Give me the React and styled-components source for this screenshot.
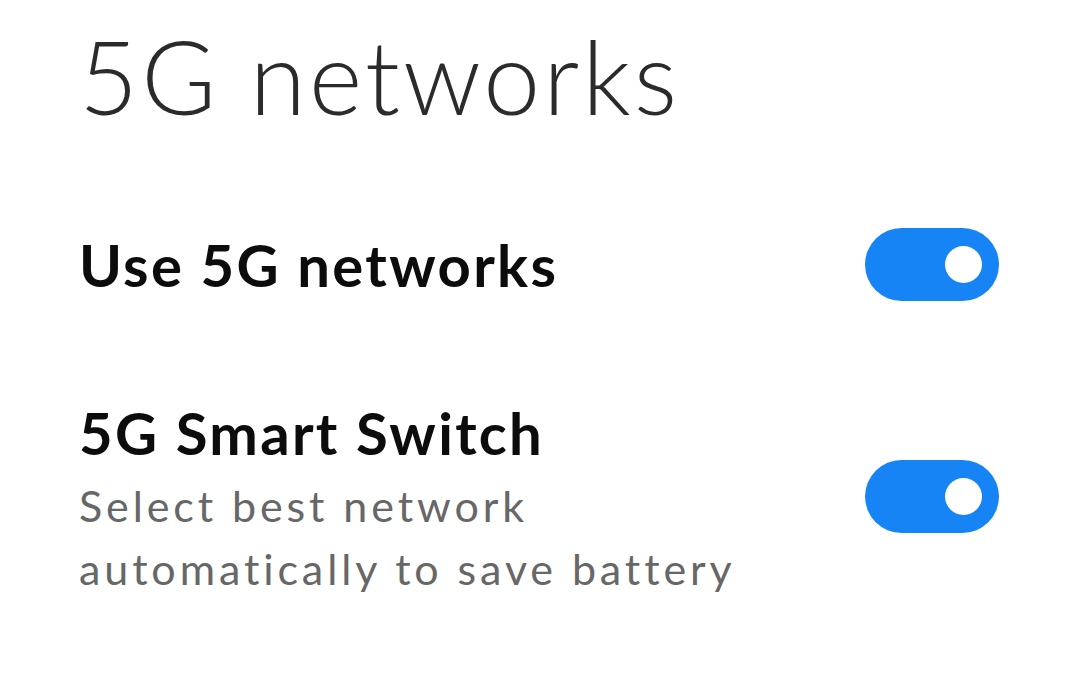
import React from 'react';
import styled, { createGlobalStyle } from 'styled-components';

const GlobalStyle = createGlobalStyle`
  html, body {
    margin: 0;
    padding: 0;
    background: #ffffff;
  }
  body {
    font-family: 'Lato', 'Noto Sans', sans-serif;
    font-variant-ligatures: none;
  }
`;

const Page = styled.div`
  width: 1080px;
  height: 673px;
  box-sizing: border-box;
  padding: 15px 81px 0 79px;
  background: #ffffff;
  overflow: hidden;
`;

const Title = styled.h1`
  margin: 0;
  font-family: 'Lato', sans-serif;
  font-weight: 300;
  font-size: 102px;
  line-height: 1.2;
  letter-spacing: 3px;
  color: #2b2b2b;
`;

const Row = styled.div`
  display: flex;
  align-items: center;
  justify-content: space-between;
  margin-top: ${(p) => p.$gap}px;
`;

const Texts = styled.div`
  display: flex;
  flex-direction: column;
`;

const Label = styled.div`
  font-family: 'Lato', sans-serif;
  font-weight: 700;
  font-size: 58px;
  line-height: 1.2;
  letter-spacing: 2.3px;
  color: #0c0c0c;
`;

const Hint = styled.div`
  margin-top: 6px;
  font-family: 'Lato', sans-serif;
  font-weight: 400;
  font-size: 43px;
  line-height: 63px;
  letter-spacing: 3.9px;
  color: #676767;
`;

const Track = styled.button`
  position: relative;
  flex: none;
  width: 134px;
  height: 73px;
  margin-bottom: ${(p) => p.$lift || 0}px;
  padding: 0;
  border: none;
  border-radius: 37px;
  background: ${(p) => (p.$on ? '#1784f6' : '#d6d6d6')};
  cursor: pointer;
`;

const Knob = styled.span`
  position: absolute;
  top: 50%;
  left: ${(p) => (p.$on ? '80px' : '17px')};
  width: 37px;
  height: 37px;
  margin-top: -18.5px;
  border-radius: 50%;
  background: #ffffff;
`;

const Toggle = ({ on, onClick, lift }) => (
  <Track $on={on} $lift={lift} onClick={onClick} aria-pressed={on}>
    <Knob $on={on} />
  </Track>
);

export default function App() {
  const [use5g, setUse5g] = React.useState(true);
  const [smart, setSmart] = React.useState(true);

  return (
    <Page>
      <GlobalStyle />
      <Title>5G networks</Title>
      <Row $gap={91}>
        <Label>Use 5G networks</Label>
        <Toggle on={use5g} onClick={() => setUse5g(!use5g)} />
      </Row>
      <Row $gap={97}>
        <Texts>
          <Label>5G Smart Switch</Label>
          <Hint>
            Select best network
            <br />
            automatically to save battery
          </Hint>
        </Texts>
        <Toggle on={smart} lift={6} onClick={() => setSmart(!smart)} />
      </Row>
    </Page>
  );
}
